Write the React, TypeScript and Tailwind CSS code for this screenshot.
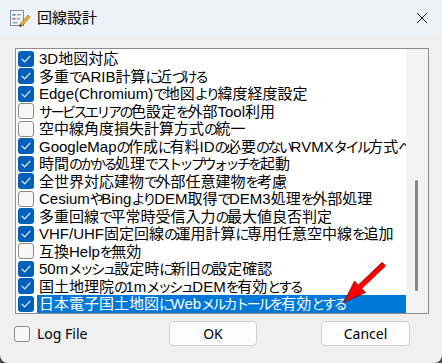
import React from 'react';

type Item = { label: string; checked: boolean };

const items: Item[] = [
  { label: '3D地図対応', checked: true },
  { label: '多重でARIB計算に近づける', checked: true },
  { label: 'Edge(Chromium)で地図より緯度経度設定', checked: true },
  { label: 'サービスエリアの色設定を外部Tool利用', checked: false },
  { label: '空中線角度損失計算方式の統一', checked: false },
  { label: 'GoogleMapの作成に有料IDの必要のないRVMXタイル方式へ変更', checked: true },
  { label: '時間のかかる処理でストップウォッチを起動', checked: true },
  { label: '全世界対応建物で外部任意建物を考慮', checked: true },
  { label: 'CesiumやBingよりDEM取得でDEM3処理を外部処理', checked: false },
  { label: '多重回線で平常時受信入力の最大値良否判定', checked: true },
  { label: 'VHF/UHF固定回線の運用計算に専用任意空中線を追加', checked: true },
  { label: '互換Helpを無効', checked: false },
  { label: '50mメッシュ設定時に新旧の設定確認', checked: true },
  { label: '国土地理院の1mメッシュDEMを有効とする', checked: true },
  { label: '日本電子国土地図にWebメルカトールを有効とする', checked: true },
];

// kana in the dialog font are narrower than kanji, so tighten kana runs
const Label: React.FC<{ text: string }> = ({ text }) => (
  <>
    {text.split(/([\u3040-\u30ff]+)/).map((part, i) =>
      /[\u3040-\u30ff]/.test(part) ? (
        <span key={i} className="text-[14px] tracking-[-2.5px]">{part}</span>
      ) : (
        <span key={i}>{part}</span>
      )
    )}
  </>
);

const CheckBox: React.FC<{ checked: boolean }> = ({ checked }) =>
  checked ? (
    <div className="w-[16px] h-[16px] rounded-[3px] bg-[#005fb8] flex items-center justify-center shrink-0">
      <svg width="10" height="8" viewBox="0 0 10 8" fill="none">
        <path d="M1 4.2 L3.7 6.8 L9 1.2" stroke="#ffffff" strokeWidth="1.1" strokeLinecap="round" strokeLinejoin="round" />
      </svg>
    </div>
  ) : (
    <div className="w-[16px] h-[16px] rounded-[3px] bg-[#f7f7f7] border border-[#8a8a8a] shrink-0" />
  );

const TitleIcon = () => (
  <svg width="22" height="20" viewBox="0 0 22 20">
    <rect x="1.5" y="2.5" width="13" height="15" fill="#f4f6fa" stroke="#7c8ca8" />
    <rect x="3.5" y="6" width="3" height="1.5" fill="#4d6fb8" />
    <rect x="8" y="6" width="4" height="1.5" fill="#9aa6bd" />
    <rect x="3.5" y="10" width="3" height="1.5" fill="#c04a8a" />
    <rect x="8" y="10" width="3" height="1.5" fill="#9aa6bd" />
    <rect x="3.5" y="14" width="5" height="1.5" fill="#9aa6bd" />
    <path d="M11 16 L19 7 L21 9 L13 18 L10.5 18.5 Z" fill="#f0b030" stroke="#8a5a10" strokeWidth="0.6" />
    <path d="M10.5 18.5 L11 16 L13 18 Z" fill="#333333" />
  </svg>
);

export default function App() {
  return (
    <div className="w-[442px] h-[363px] bg-[#4a4a4a] overflow-hidden" style={{ fontFamily: '"Liberation Sans", "Noto Sans CJK JP", sans-serif' }}>
      <div className="relative w-full h-full bg-[#f0f0f0] rounded-b-[8px] flex flex-col">
        {/* title bar */}
        <div className="h-[35px] bg-[#eef3f9] flex items-center shrink-0">
          <div className="ml-[9px] mt-[1px]">
            <TitleIcon />
          </div>
          <span className="ml-[6px] text-[15px] text-black leading-none">回線設計</span>
          <div className="ml-auto mr-[14px]">
            <svg width="12" height="12" viewBox="0 0 12 12">
              <path d="M1 1 L11 11 M11 1 L1 11" stroke="#1a1a1a" strokeWidth="1" />
            </svg>
          </div>
        </div>

        {/* list box */}
        <div className="mt-[13px] ml-[15px] w-[414px] h-[266px] border border-[#8d8d8d] bg-white flex">
          <div className="flex-1 overflow-hidden pt-[1px]">
            {items.map((it, i) => {
              const selected = i === items.length - 1;
              return (
                <div key={i} className="h-[17.5px] flex items-center pl-[2px]">
                  <CheckBox checked={it.checked} />
                  <div
                    className={`ml-[3px] pl-[2px] flex-1 h-full whitespace-nowrap overflow-hidden text-[15px] leading-[17.5px] ${
                      selected ? 'bg-[#0078d7] text-white' : 'text-black'
                    }`}
                  >
                    <Label text={it.label} />
                  </div>
                </div>
              );
            })}
          </div>
          <div className="w-[22px] bg-[#f3f3f3] relative">
            <div className="absolute left-[9px] top-[131px] w-[3px] h-[111px] rounded-full bg-[#858585]" />
          </div>
        </div>

        {/* bottom row */}
        <div className="flex items-center mt-[7px] h-[25px]" style={{ fontFamily: '"Noto Sans", sans-serif' }}>
          <div className="ml-[14px] flex items-center w-[155px]">
            <CheckBox checked={false} />
            <span className="ml-[7px] text-[14px] text-black leading-none">Log File</span>
          </div>
          <button className="w-[88px] h-[25px] bg-[#fdfdfd] border border-[#d0d0d0] rounded-[4px] text-[14px] text-black leading-none">
            OK
          </button>
          <button className="ml-[64px] w-[89px] h-[25px] bg-[#fdfdfd] border border-[#d0d0d0] rounded-[4px] text-[14px] text-black leading-none">
            Cancel
          </button>
        </div>

        {/* red annotation arrow */}
        <svg className="absolute left-0 top-0 pointer-events-none" width="442" height="363">
          <polygon
            points="344,302 365.5,292.6 361.7,288.6 385.6,265.9 382.2,262.3 358.3,285 354.5,281"
            fill="#ff0000"
            stroke="#7a0000"
            strokeWidth="0.7"
          />
        </svg>
      </div>
    </div>
  );
}
